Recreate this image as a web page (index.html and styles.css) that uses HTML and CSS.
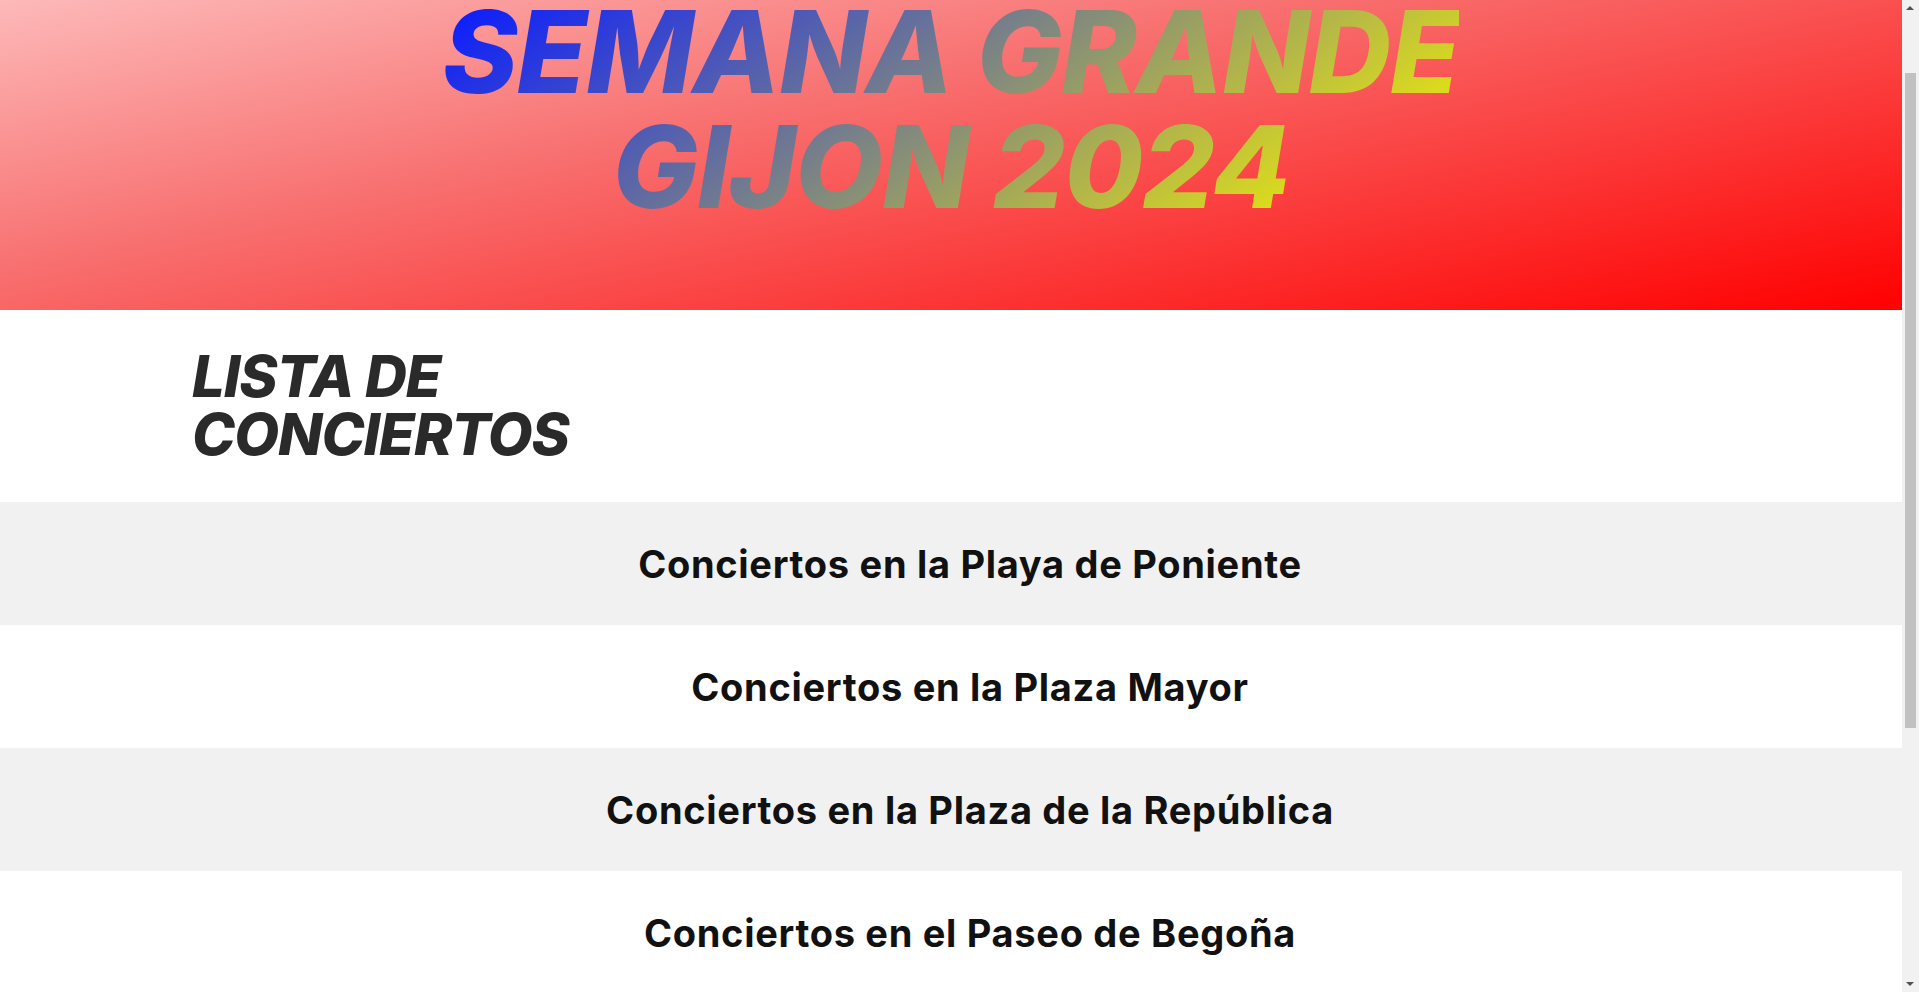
FILE: index.html
```html
<!DOCTYPE html>
<html lang="es">
<head>
<meta charset="utf-8">
<title>Semana Grande Gijón 2024</title>
<link rel="stylesheet" href="styles.css">
</head>
<body>
<header class="hero">
  <h1 class="hero-title">SEMANA GRANDE<br>GIJON 2024</h1>
</header>
<main class="content">
  <section class="intro">
    <h2 class="intro-title">LISTA DE<br>CONCIERTOS</h2>
  </section>
  <ul class="venues">
    <li class="venue venue-alt"><h3 class="venue-name">Conciertos en la Playa de Poniente</h3></li>
    <li class="venue"><h3 class="venue-name">Conciertos en la Plaza Mayor</h3></li>
    <li class="venue venue-alt"><h3 class="venue-name">Conciertos en la Plaza de la República</h3></li>
    <li class="venue"><h3 class="venue-name">Conciertos en el Paseo de Begoña</h3></li>
  </ul>
</main>
<div class="fake-scrollbar" aria-hidden="true">
  <span class="sb-arrow sb-up"></span>
  <span class="sb-thumb"></span>
  <span class="sb-arrow sb-down"></span>
</div>
<script src="script.js"></script>
</body>
</html>
```

FILE: styles.css
```css
html, body {
  margin: 0;
  padding: 0;
}
body {
  font-family: Inter, "Noto Sans", "Liberation Sans", sans-serif;
  background: #ffffff;
  color: #111111;
  margin-right: 17px;
}
.hero {
  height: 395px;
  background: linear-gradient(to bottom right, #ffd0d0 0%, #f87070 45%, #ff0000 100%);
  display: flex;
  justify-content: center;
  align-items: flex-start;
  box-sizing: border-box;
  padding-top: 79px;
}
.hero-title {
  margin: 0;
  display: inline-block;
  text-align: center;
  font-size: 114px;
  line-height: 115px;
  font-weight: 800;
  font-style: italic;
  letter-spacing: -1px;
  background: linear-gradient(145deg, #0a1cff 2%, #dada1e 84%);
  -webkit-background-clip: text;
  background-clip: text;
  color: transparent;
}
.intro {
  padding: 37px 0 39px 192px;
}
.intro-title {
  margin: 0;
  font-size: 58px;
  line-height: 58px;
  font-weight: 800;
  font-style: italic;
  letter-spacing: -1px;
  color: #2a2a2a;
}
.venues {
  list-style: none;
  margin: 0;
  padding: 0 0 371px 0;
}
.venue {
  height: 123px;
  display: flex;
  align-items: center;
  justify-content: center;
  padding-left: 38px;
  background: #ffffff;
}
.venue-alt {
  background: #f1f1f1;
}
.venue-name {
  margin: 0;
  font-size: 38px;
  font-weight: 700;
  letter-spacing: 0.7px;
  color: #111111;
}
.fake-scrollbar {
  position: fixed;
  top: 0;
  right: 0;
  width: 17px;
  height: 100vh;
  background: #f1f1f1;
}
.sb-thumb {
  position: absolute;
  top: 73px;
  left: 3px;
  width: 11px;
  height: 655px;
  background: #c1c1c1;
}
.sb-arrow {
  position: absolute;
  left: 4px;
  width: 0;
  height: 0;
  border-left: 4px solid transparent;
  border-right: 4px solid transparent;
}
.sb-up {
  top: 6px;
  border-bottom: 4px solid #505050;
}
.sb-down {
  bottom: 6px;
  border-top: 4px solid #505050;
}
```

FILE: script.js
```js
window.scrollTo(0, 85);
window.addEventListener('load', function () { window.scrollTo(0, 85); });
```
